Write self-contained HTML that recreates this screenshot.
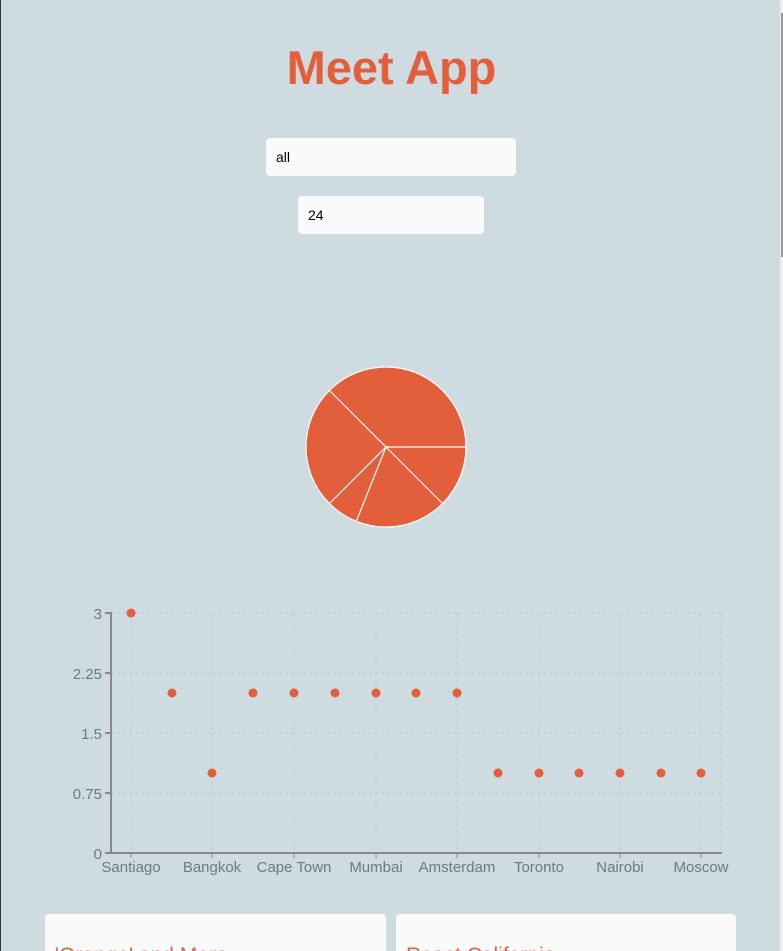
<!DOCTYPE html>
<html><head><meta charset="utf-8"><style>
html,body{margin:0;padding:0;height:951px;overflow:hidden;}
body{width:783px;background:#cedbe0;font-family:"Liberation Sans",sans-serif;position:relative;border-left:1px solid #333;box-sizing:border-box;}
h1{position:absolute;left:0;width:781px;top:40px;margin:0;text-align:center;color:#e35f3c;font-size:47px;font-weight:bold;}
.inp{position:absolute;background:#fafafa;border-radius:4px;font-size:14px;color:#000;box-sizing:border-box;padding-left:10px;line-height:38px;height:38px;}
.card{position:absolute;top:914px;height:37px;overflow:hidden;background:#fafafa;border-radius:4px 4px 0 0;}
.card div{position:absolute;left:10px;top:30px;color:#e35f3c;font-size:21px;white-space:nowrap;}
.sb{position:absolute;right:0;top:0;width:3px;height:951px;background:#f0f0f0;}
.sb i{position:absolute;right:0;top:13px;width:2px;height:244px;background:#999;}
</style></head><body>
<h1>Meet App</h1>
<div class="inp" style="left:265px;top:138px;width:250px;">all</div>
<div class="inp" style="left:297px;top:196px;width:186px;">24</div>
<svg style="position:absolute;left:0;top:0" width="783" height="951">
<g fill="#e35f3c" stroke="#fff" stroke-width="1.2">
<circle cx="385" cy="447" r="80"/>
<path d="M385 447L465 447M385 447L442 504M385 447L355 522M385 447L329 503M385 447L329 391" fill="none"/>
</g>
<g stroke="#c4c8cc" stroke-dasharray="3 3" stroke-width="1">
<line x1="110" y1="613" x2="720" y2="613"/><line x1="110" y1="673" x2="720" y2="673"/><line x1="110" y1="733" x2="720" y2="733"/><line x1="110" y1="793" x2="720" y2="793"/>
<line x1="130" y1="613" x2="130" y2="853"/><line x1="211" y1="613" x2="211" y2="853"/><line x1="293" y1="613" x2="293" y2="853"/><line x1="375" y1="613" x2="375" y2="853"/><line x1="456" y1="613" x2="456" y2="853"/><line x1="538" y1="613" x2="538" y2="853"/><line x1="619" y1="613" x2="619" y2="853"/><line x1="700" y1="613" x2="700" y2="853"/><line x1="720" y1="613" x2="720" y2="853"/>
</g>
<g stroke="#888" stroke-width="2"><line x1="110" y1="612" x2="110" y2="854"/><line x1="109" y1="853" x2="721" y2="853"/>
<line x1="104" y1="613" x2="110" y2="613"/><line x1="104" y1="673" x2="110" y2="673"/><line x1="104" y1="733" x2="110" y2="733"/><line x1="104" y1="793" x2="110" y2="793"/><line x1="104" y1="853" x2="110" y2="853"/>
</g>
<g stroke="#888" stroke-width="1"><line x1="130" y1="853" x2="130" y2="858"/><line x1="211" y1="853" x2="211" y2="858"/><line x1="293" y1="853" x2="293" y2="858"/><line x1="375" y1="853" x2="375" y2="858"/><line x1="456" y1="853" x2="456" y2="858"/><line x1="538" y1="853" x2="538" y2="858"/><line x1="619" y1="853" x2="619" y2="858"/><line x1="700" y1="853" x2="700" y2="858"/></g>
<g fill="#707880" font-family="Liberation Sans, sans-serif" font-size="15" text-anchor="end">
<text x="101" y="619">3</text><text x="101" y="679">2.25</text><text x="101" y="739">1.5</text><text x="101" y="799">0.75</text><text x="101" y="859">0</text>
</g>
<g fill="#707880" font-family="Liberation Sans, sans-serif" font-size="15" text-anchor="middle">
<text x="130" y="872">Santiago</text><text x="211" y="872">Bangkok</text><text x="293" y="872">Cape Town</text><text x="375" y="872">Mumbai</text><text x="456" y="872">Amsterdam</text><text x="538" y="872">Toronto</text><text x="619" y="872">Nairobi</text><text x="700" y="872">Moscow</text>
</g>
<g fill="#e35f3c">
<circle cx="130" cy="613" r="4.5"/><circle cx="171" cy="693" r="4.5"/><circle cx="211" cy="773" r="4.5"/><circle cx="252" cy="693" r="4.5"/><circle cx="293" cy="693" r="4.5"/><circle cx="334" cy="693" r="4.5"/><circle cx="375" cy="693" r="4.5"/><circle cx="415" cy="693" r="4.5"/><circle cx="456" cy="693" r="4.5"/><circle cx="497" cy="773" r="4.5"/><circle cx="538" cy="773" r="4.5"/><circle cx="578" cy="773" r="4.5"/><circle cx="619" cy="773" r="4.5"/><circle cx="660" cy="773" r="4.5"/><circle cx="700" cy="773" r="4.5"/>
</g>
</svg>
<div class="card" style="left:44px;width:341px;"><div>'Orange' and More</div></div>
<div class="card" style="left:395px;width:340px;"><div>React California</div></div>
<div class="sb"><i></i></div>
</body></html>
